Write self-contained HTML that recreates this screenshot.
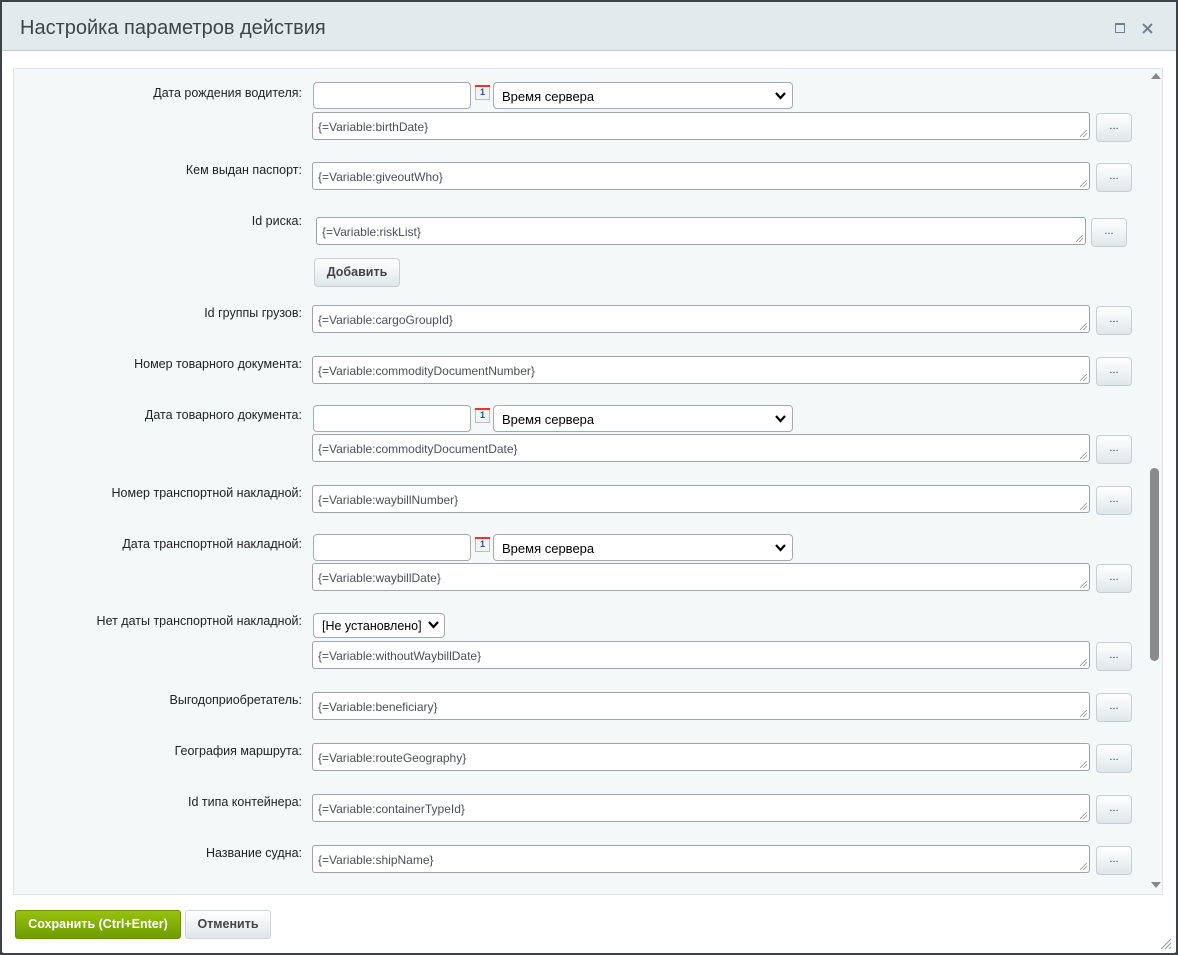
<!DOCTYPE html>
<html><head><meta charset="utf-8"><style>
*{box-sizing:border-box}
body{margin:0;width:1178px;height:955px;background:#3c4248;font-family:"Liberation Sans","DejaVu Sans",sans-serif;position:relative;overflow:hidden}
.dlg{position:absolute;left:2px;top:2px;width:1174px;height:951px;background:#fff;border-radius:2px}
.hdr{position:absolute;left:2px;top:2px;width:1174px;height:49px;background:#e2eaed;border-bottom:1px solid #c3c9cc}
.hdr .t{position:absolute;left:18px;top:15px;font-size:20px;color:#3e4448}
.panel{position:absolute;left:13px;top:68px;width:1150px;height:827px;background:#f5f8f9;border:1px solid #dbe5e9}
.a{position:absolute}
.lbl{position:absolute;font-size:12.5px;color:#222;text-align:right;width:300px;left:2px;margin-top:1px}
.ta{position:absolute;background:#fff;border:1px solid #9da3a8;border-radius:3px;font-size:12px;color:#4a5056;padding:7px 0 0 5px}
.ta:after{content:"";position:absolute;right:2px;bottom:2px;width:7px;height:7px;background:linear-gradient(135deg,transparent 45%,#888 46%,#888 52%,transparent 53%,transparent 70%,#888 71%,#888 77%,transparent 78%)}
.inp{position:absolute;background:#fff;border:1px solid #a5abb0;border-radius:4px}
.sel{position:absolute;background:#fff;border:1px solid #a5abb0;border-radius:4px;font-size:13px;color:#000;padding:6px 0 0 8px}
.sel svg{position:absolute;right:6px;top:9px}
.btn{position:absolute;width:36px;height:29px;border:1px solid #c8cfd4;border-radius:4px;background:linear-gradient(#fff,#dfe7ea);text-align:center;font-size:11px;color:#2a3f66;line-height:24px}
.cal{position:absolute;width:15px;height:15px;border:1px solid #b9bec2;background:#f3f3f3;font-size:9px;color:#2255aa;text-align:center;line-height:13px;font-weight:bold}
.cal:before{content:"";position:absolute;left:-1px;top:-1px;width:15px;height:2px;background:#e33}
</style></head><body>
<div class="dlg"></div>
<div class="hdr"><div class="t">Настройка параметров действия</div>
<div class="a" style="left:1113px;top:21px;width:10px;height:10px;border:1.5px solid #6d7f92;border-top-width:2.5px"></div>
<svg class="a" style="left:1140px;top:21px" width="11" height="11"><path d="M1 1L10 10M10 1L1 10" stroke="#6d7f92" stroke-width="2"/></svg>
</div>
<div class="panel"></div>
<div class="a" style="left:1151px;top:73px;width:0;height:0;border-left:5px solid transparent;border-right:5px solid transparent;border-bottom:6px solid #888"></div>
<div class="a" style="left:1151px;top:882px;width:0;height:0;border-left:5px solid transparent;border-right:5px solid transparent;border-top:6px solid #888"></div>
<div class="a" style="left:1150px;top:468px;width:9px;height:193px;background:#8a8a8a;border-radius:5px"></div>

<div class="lbl" style="top:85px">Дата рождения водителя:</div>
<div class="inp" style="left:313px;top:82px;width:158px;height:27px"></div>
<div class="cal" style="left:475px;top:85px">1</div>
<div class="sel" style="left:493px;top:82px;width:300px;height:27px">Время сервера<svg width="11" height="8"><path d="M1 1L5.5 6L10 1" stroke="#000" stroke-width="2.2" fill="none"/></svg></div>
<div class="ta" style="left:312px;top:112px;width:778px;height:28px">{=Variable:birthDate}</div>
<div class="btn" style="left:1096px;top:113px">...</div>

<div class="lbl" style="top:162px">Кем выдан паспорт:</div>
<div class="ta" style="left:312px;top:162px;width:778px;height:28px">{=Variable:giveoutWho}</div>
<div class="btn" style="left:1096px;top:163px">...</div>

<div class="lbl" style="top:213px">Id риска:</div>
<div class="ta" style="left:316px;top:217px;width:770px;height:28px">{=Variable:riskList}</div>
<div class="btn" style="left:1091px;top:218px">...</div>
<div class="btn" style="left:314px;top:258px;width:86px;font-weight:bold;font-size:12.5px;line-height:27px;color:#444">Добавить</div>

<div class="lbl" style="top:305px">Id группы грузов:</div>
<div class="ta" style="left:312px;top:305px;width:778px;height:28px">{=Variable:cargoGroupId}</div>
<div class="btn" style="left:1096px;top:306px">...</div>

<div class="lbl" style="top:356px">Номер товарного документа:</div>
<div class="ta" style="left:312px;top:356px;width:778px;height:28px">{=Variable:commodityDocumentNumber}</div>
<div class="btn" style="left:1096px;top:357px">...</div>

<div class="lbl" style="top:407px">Дата товарного документа:</div>
<div class="inp" style="left:313px;top:405px;width:158px;height:27px"></div>
<div class="cal" style="left:475px;top:408px">1</div>
<div class="sel" style="left:493px;top:405px;width:300px;height:27px">Время сервера<svg width="11" height="8"><path d="M1 1L5.5 6L10 1" stroke="#000" stroke-width="2.2" fill="none"/></svg></div>
<div class="ta" style="left:312px;top:434px;width:778px;height:28px">{=Variable:commodityDocumentDate}</div>
<div class="btn" style="left:1096px;top:435px">...</div>

<div class="lbl" style="top:485px">Номер транспортной накладной:</div>
<div class="ta" style="left:312px;top:485px;width:778px;height:28px">{=Variable:waybillNumber}</div>
<div class="btn" style="left:1096px;top:486px">...</div>

<div class="lbl" style="top:536px">Дата транспортной накладной:</div>
<div class="inp" style="left:313px;top:534px;width:158px;height:27px"></div>
<div class="cal" style="left:475px;top:537px">1</div>
<div class="sel" style="left:493px;top:534px;width:300px;height:27px">Время сервера<svg width="11" height="8"><path d="M1 1L5.5 6L10 1" stroke="#000" stroke-width="2.2" fill="none"/></svg></div>
<div class="ta" style="left:312px;top:563px;width:778px;height:28px">{=Variable:waybillDate}</div>
<div class="btn" style="left:1096px;top:564px">...</div>

<div class="lbl" style="top:613px">Нет даты транспортной накладной:</div>
<div class="sel" style="left:313px;top:613px;width:132px;height:25px;padding-top:5px;font-size:12.5px">[Не установлено]<svg width="11" height="8" style="top:7px;right:5px"><path d="M1 1L5.5 6L10 1" stroke="#000" stroke-width="2.2" fill="none"/></svg></div>
<div class="ta" style="left:312px;top:641px;width:778px;height:28px">{=Variable:withoutWaybillDate}</div>
<div class="btn" style="left:1096px;top:642px">...</div>

<div class="lbl" style="top:692px">Выгодоприобретатель:</div>
<div class="ta" style="left:312px;top:692px;width:778px;height:28px">{=Variable:beneficiary}</div>
<div class="btn" style="left:1096px;top:693px">...</div>

<div class="lbl" style="top:743px">География маршрута:</div>
<div class="ta" style="left:312px;top:743px;width:778px;height:28px">{=Variable:routeGeography}</div>
<div class="btn" style="left:1096px;top:744px">...</div>

<div class="lbl" style="top:794px">Id типа контейнера:</div>
<div class="ta" style="left:312px;top:794px;width:778px;height:28px">{=Variable:containerTypeId}</div>
<div class="btn" style="left:1096px;top:795px">...</div>

<div class="lbl" style="top:845px">Название судна:</div>
<div class="ta" style="left:312px;top:845px;width:778px;height:28px">{=Variable:shipName}</div>
<div class="btn" style="left:1096px;top:846px">...</div>

<div class="a" style="left:15px;top:910px;width:166px;height:29px;border-radius:3px;background:linear-gradient(#98c10d,#6e9b00);border:1px solid #6b9500;color:#fff;font-weight:bold;font-size:12.5px;text-align:center;line-height:27px">Сохранить (Ctrl+Enter)</div>
<div class="a" style="left:185px;top:910px;width:86px;height:29px;border-radius:3px;background:linear-gradient(#fff,#dfe6e9);border:1px solid #cfd6da;color:#444;font-weight:bold;font-size:12.5px;text-align:center;line-height:27px">Отменить</div>
<svg class="a" style="left:1160px;top:938px" width="12" height="12"><path d="M11 1L1 11M11 5L5 11M11 9L9 11" stroke="#999" stroke-width="1"/></svg>
</body></html>
